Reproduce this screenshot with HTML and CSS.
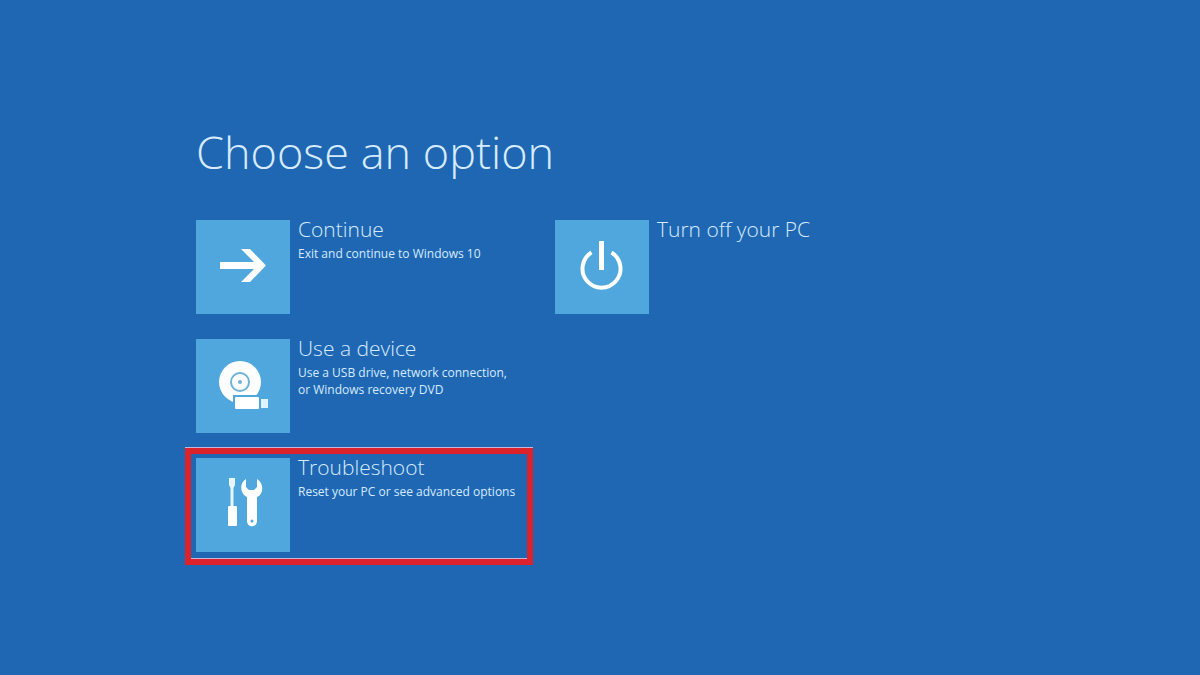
FILE: index.html
```html
<!DOCTYPE html>
<html lang="en">
<head>
    <meta charset="UTF-8">
    <meta name="viewport" content="width=device-width, initial-scale=1.0">
    <title>Choose an option</title>
    <link rel="stylesheet" href="styles.css">
</head>
<body>
    <main class="recovery">
        <h1>Choose an option</h1>
        <div class="options">
            <button type="button" class="option">
                <span class="tile">
                    <svg viewBox="0 0 94 94" aria-hidden="true">
                        <path d="M24 42H58L45 29H54L70 45.500L54 62H45L58 49H24Z" fill="#fff"/>
                    </svg>
                </span>
                <span class="text">
                    <span class="title">Continue</span>
                    <span class="desc">Exit and continue to Windows 10</span>
                </span>
            </button>

            <button type="button" class="option">
                <span class="tile">
                    <svg viewBox="0 0 94 94" aria-hidden="true">
                        <path d="M36.500 32.500A19 19 0 1 0 56.500 32.500" fill="none" stroke="#fff" stroke-width="4"/>
                        <path d="M46.500 21V50" stroke="#fff" stroke-width="5"/>
                    </svg>
                </span>
                <span class="text">
                    <span class="title">Turn off your PC</span>
                </span>
            </button>

            <button type="button" class="option">
                <span class="tile">
                    <svg viewBox="0 0 94 94" aria-hidden="true">
                        <circle cx="44" cy="43" r="21" fill="#fff"/>
                        <circle cx="44" cy="43" r="9" fill="none" stroke="#6db3dc" stroke-width="2"/>
                        <circle cx="44" cy="43" r="2" fill="#6db3dc"/>
                        <path d="M37 56H75V73H37Z" fill="#4fa7dd"/>
                        <rect x="39" y="58" width="24" height="12" rx="1" fill="#fff"/>
                        <rect x="65" y="60" width="7" height="9" fill="#dff2fd"/>
                    </svg>
                </span>
                <span class="text">
                    <span class="title">Use a device</span>
                    <span class="desc">Use a USB drive, network connection,<br>or Windows recovery DVD</span>
                </span>
            </button>

            <button type="button" class="option highlighted">
                <span class="tile">
                    <svg viewBox="0 0 94 94" aria-hidden="true">
                        <!-- screwdriver -->
                        <path d="M33 20H39V27L37.500 30V49H34.500V30L33 27Z" fill="#e6f5fd"/>
                        <rect x="32" y="48" width="9" height="20" rx="1" fill="#fff"/>
                        <!-- wrench -->
                        <path d="M50 21C43 25 44 36 51 39V63C51 70 61 70 61 63V39C68 36 68 25 61 21V29L58 32H53L50 29Z" fill="#fff"/>
                        <circle cx="56" cy="63" r="1.500" fill="#4fa7dd"/>
                    </svg>
                </span>
                <span class="text">
                    <span class="title">Troubleshoot</span>
                    <span class="desc">Reset your PC or see advanced options</span>
                </span>
            </button>
        </div>
    </main>
</body>
</html>
```
FILE: styles.css
```css
* {
    box-sizing: border-box;
}

body {
    margin: 0;
    min-height: 100vh;
    background-color: #1f67b3;
    color: #d6ebff;
    font-family: "Open Sans", "Noto Sans", sans-serif;
}

.recovery {
    padding: 120px 24px 40px 196px;
}

h1 {
    margin: 0 0 36px;
    font-size: 45px;
    font-weight: 300;
    line-height: 64px;
}

.options {
    display: grid;
    grid-template-columns: repeat(2, minmax(0, 334px));
    gap: 25px;
}

.option {
    position: relative;
    display: flex;
    align-items: flex-start;
    gap: 8px;
    padding: 0;
    border: none;
    background: none;
    color: inherit;
    font-family: inherit;
    text-align: left;
    cursor: pointer;
}

.option:nth-child(3),
.option:nth-child(4) {
    grid-column: 1;
}

.tile {
    flex: none;
    width: 94px;
    height: 94px;
    background-color: #4fa7dd;
}

.tile svg {
    display: block;
    width: 100%;
    height: 100%;
}

.title,
.desc {
    display: block;
    white-space: nowrap;
}

.title {
    margin-top: -5px;
    font-size: 21px;
    font-weight: 300;
    line-height: 28px;
}

.desc {
    margin-top: 2px;
    font-size: 12px;
    line-height: 17px;
}

/* red frame around the recommended option */
.highlighted::after {
    content: "";
    position: absolute;
    top: -10px;
    right: -3px;
    bottom: -13px;
    left: -11px;
    border: 6px solid #dc232c;
    box-shadow: 0 -1px #c3b5dc, inset 0 -1px #c3b5dc;
}
```
